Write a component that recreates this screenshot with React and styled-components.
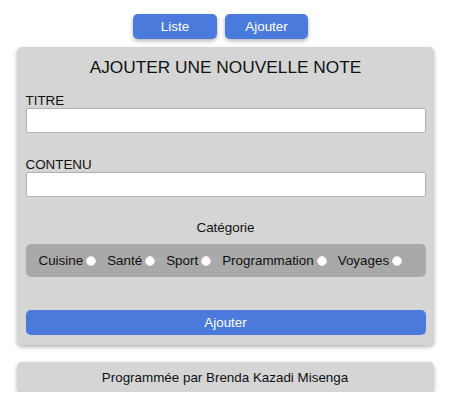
import React, { useState } from 'react';
import styled, { createGlobalStyle } from 'styled-components';

const GlobalStyle = createGlobalStyle`
  html, body {
    margin: 0;
    padding: 0;
    background: #ffffff;
    font-family: "Liberation Sans", Arial, sans-serif;
    color: #111;
  }
  * { box-sizing: border-box; }
`;

const Page = styled.div`
  width: 450px;
  padding-top: 14px;
  display: flex;
  flex-direction: column;
  align-items: center;
`;

const Nav = styled.nav`
  display: flex;
  gap: 8px;
  margin-right: 9px;
  margin-bottom: 8px;
`;

const NavButton = styled.button`
  width: ${p => p.w}px;
  height: 25px;
  border: none;
  border-radius: 5px;
  background: #4a7bdc;
  color: #fff;
  font-family: inherit;
  font-size: 13.4px;
  box-shadow: 0 2px 4px rgba(0, 0, 0, 0.3);
  cursor: pointer;
`;

const Card = styled.form`
  width: 417px;
  background: #d5d5d5;
  border-radius: 5px;
  box-shadow: 0 2px 4px rgba(0, 0, 0, 0.3);
  padding: 10px 8px 10px 9px;
  display: flex;
  flex-direction: column;
`;

const Title = styled.h2`
  margin: 0 0 16px;
  font-size: 17.3px;
  font-weight: normal;
  text-align: center;
  line-height: 20px;
`;

const Label = styled.label`
  font-size: 13.4px;
  line-height: 15px;
  text-align: ${p => (p.center ? 'center' : 'left')};
  margin-top: ${p => p.top || 0}px;
`;

const Field = styled.input`
  width: 400px;
  height: 25px;
  border: 1px solid #b0b0b0;
  border-radius: 2px;
  background: #fff;
  font-family: inherit;
  font-size: 13.4px;
  padding: 0 4px;
  outline: none;
`;

const RadioBar = styled.div`
  margin-top: 9px;
  width: 400px;
  height: 33px;
  background: #a9a9a9;
  border-radius: 5px;
  display: flex;
  align-items: center;
  padding-left: 13px;
  font-size: 13.4px;
`;

const Choice = styled.label`
  display: flex;
  align-items: center;
  margin-right: 11px;
  cursor: pointer;
`;

const Radio = styled.input`
  appearance: none;
  width: 10px;
  height: 10px;
  margin: 0 0 0 3px;
  border-radius: 50%;
  background: #fff;
  border: 1px solid #e8e8e8;
  &:checked {
    background: #4a7bdc;
  }
`;

const Submit = styled.button`
  margin-top: 33px;
  width: 400px;
  height: 25px;
  border: none;
  border-radius: 5px;
  background: #4a7bdc;
  color: #fff;
  font-family: inherit;
  font-size: 13.4px;
  cursor: pointer;
`;

const Footer = styled.footer`
  margin-top: 17px;
  width: 417px;
  height: 30px;
  background: #d5d5d5;
  border-radius: 5px;
  box-shadow: 0 2px 4px rgba(0, 0, 0, 0.3);
  display: flex;
  align-items: center;
  justify-content: center;
  font-size: 13.4px;
`;

const categories = ['Cuisine', 'Santé', 'Sport', 'Programmation', 'Voyages'];

export default function App() {
  const [cat, setCat] = useState('');
  return (
    <>
      <GlobalStyle />
      <Page>
        <Nav>
          <NavButton w={84}>Liste</NavButton>
          <NavButton w={83}>Ajouter</NavButton>
        </Nav>
        <Card onSubmit={e => e.preventDefault()}>
          <Title>AJOUTER UNE NOUVELLE NOTE</Title>
          <Label>TITRE</Label>
          <Field type="text" />
          <Label top={24}>CONTENU</Label>
          <Field type="text" />
          <Label center top={23}>Catégorie</Label>
          <RadioBar>
            {categories.map(c => (
              <Choice key={c}>
                {c}
                <Radio
                  type="radio"
                  name="categorie"
                  checked={cat === c}
                  onChange={() => setCat(c)}
                />
              </Choice>
            ))}
          </RadioBar>
          <Submit type="submit">Ajouter</Submit>
        </Card>
        <Footer>Programmée par Brenda Kazadi Misenga</Footer>
      </Page>
    </>
  );
}
